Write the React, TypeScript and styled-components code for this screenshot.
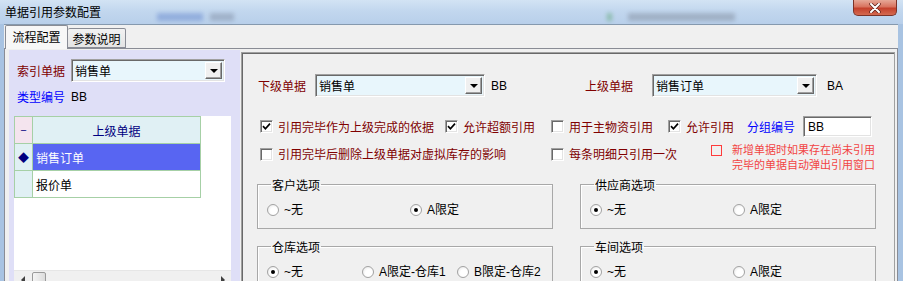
import styled, { createGlobalStyle } from 'styled-components';

const GlobalStyle = createGlobalStyle`
  html, body {
    margin: 0;
    padding: 0;
    background: #ffffff;
  }
  body {
    font-family: "Liberation Sans", "Noto Sans CJK SC", sans-serif;
    font-size: 12px;
  }
`;

type Field = { label: string; value: string; code: string; labelWidth: number; width: number; gap: number; span: number };

const fields: Field[] = [
  { label: '下级单据', value: '销售单', code: 'BB', labelWidth: 57, width: 170, gap: 6, span: 327 },
  { label: '上级单据', value: '销售订单', code: 'BA', labelWidth: 67, width: 165, gap: 10, span: 300 },
];

type RadioOpt = { text: string; checked: boolean; width: number };
type Group = { title: string; options: RadioOpt[] };

const groups: Group[] = [
  { title: '客户选项', options: [{ text: '~无', checked: false, width: 143 }, { text: 'A限定', checked: true, width: 143 }] },
  { title: '供应商选项', options: [{ text: '~无', checked: true, width: 143 }, { text: 'A限定', checked: false, width: 143 }] },
  {
    title: '仓库选项',
    options: [
      { text: '~无', checked: true, width: 95 },
      { text: 'A限定-仓库1', checked: false, width: 95 },
      { text: 'B限定-仓库2', checked: false, width: 95 },
    ],
  },
  { title: '车间选项', options: [{ text: '~无', checked: true, width: 143 }, { text: 'A限定', checked: false, width: 143 }] },
];

function CheckMark() {
  return (
    <svg width="9" height="9" viewBox="0 0 9 9">
      <polyline points="1,4.2 3.4,6.8 8,1.6" fill="none" stroke="#000" strokeWidth="1.7" />
    </svg>
  );
}

function CloseGlyph() {
  return (
    <svg width="12" height="10" viewBox="0 0 12 10">
      <path d="M2 1 L10 9 M10 1 L2 9" stroke="#5a1f18" strokeWidth="3.4" strokeLinecap="round" />
      <path d="M2 1 L10 9 M10 1 L2 9" stroke="#ffffff" strokeWidth="2" strokeLinecap="round" />
    </svg>
  );
}

function Combo({ value, width }: { value: string; width: number }) {
  return (
    <ComboBox $width={width}>
      <ComboText>{value}</ComboText>
      <ComboButton>
        <DownArrow />
      </ComboButton>
    </ComboBox>
  );
}

function Check({ label, checked, width, top = 0 }: { label: string; checked: boolean; width: number; top?: number }) {
  return (
    <CheckItem $width={width} $top={top}>
      <CheckBox>{checked ? <CheckMark /> : null}</CheckBox>
      <CheckLabel>{label}</CheckLabel>
    </CheckItem>
  );
}

function App() {
  return (
    <>
      <GlobalStyle />
      <Window>
        <TitleBar>
          <Glow $x={157} $w={46} $c="#5f82cc" />
          <Glow $x={210} $w={24} $c="#7d8aa0" />
          <Glow $x={607} $w={5} $c="#4fa060" />
          <Glow $x={628} $w={107} $c="#7e8898" />
          <Title>单据引用参数配置</Title>
          <CloseButton>
            <CloseGlyph />
          </CloseButton>
        </TitleBar>

        <Client>
          <TabStrip>
            <Tab $active>流程配置</Tab>
            <Tab>参数说明</Tab>
          </TabStrip>

          <TabPage>
            <LeftPanel>
              <IndexRow>
                <DarkLabel $width={54}>索引单据</DarkLabel>
                <Combo value="销售单" width={154} />
              </IndexRow>
              <TypeRow>
                <BlueLabel $width={54}>类型编号</BlueLabel>
                <Code>BB</Code>
              </TypeRow>

              <Grid>
                <Table>
                  <tbody>
                    <tr>
                      <MarkCell $bg="#f4e4ee">−</MarkCell>
                      <HeadCell>上级单据</HeadCell>
                    </tr>
                    <tr>
                      <MarkCell $bg="#e0f0f4">◆</MarkCell>
                      <DataCell $selected>销售订单</DataCell>
                    </tr>
                    <tr>
                      <MarkCell $bg="#e0f0f4" />
                      <DataCell>报价单</DataCell>
                    </tr>
                  </tbody>
                </Table>
                <HScroll>
                  <ScrollArrow $dir="left" />
                  <Thumb />
                  <ScrollArrow $dir="right" />
                </HScroll>
              </Grid>
            </LeftPanel>

            <RightPanel>
              <FieldRow>
                {fields.map((f) => (
                  <FieldGroup key={f.label} $width={f.span}>
                    <DarkLabel $width={f.labelWidth}>{f.label}</DarkLabel>
                    <Combo value={f.value} width={f.width} />
                    <Code $gap={f.gap}>{f.code}</Code>
                  </FieldGroup>
                ))}
              </FieldRow>

              <OptRow>
                <Check label="引用完毕作为上级完成的依据" checked width={185} />
                <Check label="允许超额引用" checked width={106} />
                <Check label="用于主物资引用" checked={false} width={117} />
                <Check label="允许引用" checked width={79} />
                <BlueLabel $width={56}>分组编号</BlueLabel>
                <TextBox>BB</TextBox>
              </OptRow>

              <OptRow2>
                <Check label="引用完毕后删除上级单据对虚拟库存的影响" checked={false} width={291} top={3} />
                <Check label="每条明细只引用一次" checked={false} width={160} top={3} />
                <Notice>
                  <RedBox />
                  <NoticeText>
                    <NoticeLine>新增单据时如果存在尚未引用</NoticeLine>
                    <NoticeLine>完毕的单据自动弹出引用窗口</NoticeLine>
                  </NoticeText>
                </Notice>
              </OptRow2>

              <Groups>
                {groups.map((g) => (
                  <GroupBox key={g.title}>
                    <Legend>{g.title}</Legend>
                    <RadioRow>
                      {g.options.map((o) => (
                        <RadioItem key={o.text} $width={o.width}>
                          <Radio $checked={o.checked} />
                          <RadioLabel>{o.text}</RadioLabel>
                        </RadioItem>
                      ))}
                    </RadioRow>
                  </GroupBox>
                ))}
              </Groups>
            </RightPanel>
          </TabPage>
        </Client>
      </Window>
    </>
  );
}

const Window = styled.div`
    width: 903px;
    height: 281px;
    overflow: hidden;
    display: flex;
    flex-direction: column;
    background: #a8c3e2;
  `,
  TitleBar = styled.div`
    position: relative;
    height: 24px;
    flex-shrink: 0;
    display: flex;
    align-items: flex-start;
    justify-content: space-between;
    padding-left: 5px;
    background: linear-gradient(180deg, #d2e3f4 0%, #c2d7ee 45%, #b8cfea 100%);
  `,
  Glow = styled.span<{ $x: number; $w: number; $c: string }>`
    position: absolute;
    left: ${(p) => p.$x}px;
    top: 13px;
    width: ${(p) => p.$w}px;
    height: 8px;
    background: ${(p) => p.$c};
    opacity: 0.45;
    filter: blur(2px);
  `,
  Title = styled.span`
    position: relative;
    margin-top: 5px;
    font-family: "Noto Sans CJK SC", sans-serif;
    font-size: 12px;
    line-height: 13px;
    color: #000000;
  `,
  CloseButton = styled.div`
    width: 44px;
    height: 16px;
    margin-right: 6px;
    box-sizing: border-box;
    display: flex;
    align-items: center;
    justify-content: center;
    border: 1px solid #7b3328;
    border-top: none;
    border-radius: 0 0 5px 5px;
    background: linear-gradient(180deg, #e6a897 0%, #d8735f 45%, #c4412c 55%, #d46a50 100%);
  `,
  Client = styled.div`
    flex: 1;
    min-height: 0;
    margin: 0 5px 0 4px;
    display: flex;
    flex-direction: column;
    background: #f0f0f0;
    border-top: 1px solid #8599ae;
  `,
  TabStrip = styled.div`
    height: 23px;
    flex-shrink: 0;
    display: flex;
    align-items: flex-end;
    padding-left: 1px;
  `,
  Tab = styled.div<{ $active?: boolean }>`
    position: relative;
    z-index: ${(p) => (p.$active ? 2 : 1)};
    box-sizing: border-box;
    width: ${(p) => (p.$active ? 63 : 58)}px;
    height: ${(p) => (p.$active ? 24 : 20)}px;
    margin-bottom: ${(p) => (p.$active ? -1 : 0)}px;
    display: flex;
    align-items: center;
    justify-content: center;
    padding-bottom: ${(p) => (p.$active ? 2 : 0)}px;
    border: 1px solid #898c95;
    border-bottom: ${(p) => (p.$active ? 'none' : '1px solid #898c95')};
    border-left: ${(p) => (p.$active ? '1px solid #898c95' : 'none')};
    border-radius: 2px 2px 0 0;
    background: ${(p) => (p.$active ? '#f7f7f7' : 'linear-gradient(#f2f2f2, #e4e4e4)')};
    font-family: "Noto Sans CJK SC", sans-serif;
    font-size: 12px;
    color: #000000;
  `,
  TabPage = styled.div`
    flex: 1;
    min-height: 0;
    display: flex;
    gap: 1px;
    padding: 1px 2px 0 4px;
    border: 1px solid #898c95;
    border-bottom: none;
    background: #f0f0f0;
  `,
  LeftPanel = styled.div`
    width: 231px;
    flex-shrink: 0;
    box-sizing: border-box;
    padding: 9px 0 0 8px;
    display: flex;
    flex-direction: column;
    background: #dfdff7;
  `,
  IndexRow = styled.div`
    height: 23px;
    display: flex;
    align-items: center;
  `,
  TypeRow = styled.div`
    height: 12px;
    margin-top: 9px;
    display: flex;
    align-items: center;
  `,
  DarkLabel = styled.span<{ $width: number }>`
    width: ${(p) => p.$width}px;
    flex-shrink: 0;
    font-family: "Noto Sans CJK SC", sans-serif;
    font-size: 12px;
    line-height: 14px;
    color: #800000;
  `,
  BlueLabel = styled.span<{ $width: number }>`
    width: ${(p) => p.$width}px;
    flex-shrink: 0;
    font-family: "Noto Sans CJK SC", sans-serif;
    font-size: 12px;
    line-height: 14px;
    color: #0000ff;
  `,
  Code = styled.span<{ $gap?: number }>`
    margin-left: ${(p) => p.$gap ?? 0}px;
    font-size: 12px;
    color: #000000;
  `,
  ComboBox = styled.div<{ $width: number }>`
    width: ${(p) => p.$width}px;
    height: 23px;
    flex-shrink: 0;
    box-sizing: border-box;
    display: flex;
    align-items: center;
    border: 1px solid;
    border-color: #a0a0a0 #ffffff #ffffff #a0a0a0;
    box-shadow: inset 1px 1px 0 #696969, inset -1px -1px 0 #e3e3e3;
    background: #e8f6fc;
    padding: 2px 2px 2px 3px;
  `,
  ComboText = styled.span`
    flex: 1;
    font-family: "Noto Sans CJK SC", sans-serif;
    font-size: 12px;
    color: #000000;
  `,
  ComboButton = styled.div`
    width: 17px;
    height: 17px;
    box-sizing: border-box;
    display: flex;
    align-items: center;
    justify-content: center;
    background: #f0f0f0;
    border: 1px solid;
    border-color: #ffffff #696969 #696969 #ffffff;
    box-shadow: inset -1px -1px 0 #a0a0a0;
  `,
  DownArrow = styled.span`
    width: 0;
    height: 0;
    border-left: 4px solid transparent;
    border-right: 4px solid transparent;
    border-top: 4px solid #000000;
  `,
  Grid = styled.div`
    width: 217px;
    height: 173px;
    margin: 13px 0 0 -3px;
    flex-shrink: 0;
    display: flex;
    flex-direction: column;
    background: #ffffff;
  `,
  Table = styled.table`
    width: 187px;
    border-collapse: collapse;
    font-family: "Noto Sans CJK SC", sans-serif;
    font-size: 12px;
    tr {
      height: 27px;
    }
    td {
      border: 1px solid #a6d0a6;
      padding: 0;
    }
  `,
  MarkCell = styled.td<{ $bg: string }>`
    width: 17px;
    background: ${(p) => p.$bg};
    text-align: center;
    color: #000080;
    font-size: 11px;
  `,
  HeadCell = styled.td`
    background: #e0f0f4;
    color: #000080;
    text-align: center;
  `,
  DataCell = styled.td<{ $selected?: boolean }>`
    padding-left: 3px !important;
    background: ${(p) => (p.$selected ? '#5865f2' : '#ffffff')};
    color: ${(p) => (p.$selected ? '#ffffff' : '#000000')};
  `,
  HScroll = styled.div`
    margin-top: auto;
    height: 17px;
    flex-shrink: 0;
    display: flex;
    align-items: flex-start;
    padding-top: 1px;
    background: #f0f0f0;
    border-top: 1px solid #e6e6e6;
  `,
  ScrollArrow = styled.span<{ $dir: 'left' | 'right' }>`
    width: 17px;
    height: 15px;
    display: flex;
    align-items: center;
    justify-content: center;
    margin-left: ${(p) => (p.$dir === 'right' ? 'auto' : '0')};
    &::before {
      content: '';
      border-top: 4px solid transparent;
      border-bottom: 4px solid transparent;
      ${(p) => (p.$dir === 'left' ? 'border-right: 4px solid #404040;' : 'border-left: 4px solid #404040;')}
    }
  `,
  Thumb = styled.span`
    width: 14px;
    height: 15px;
    margin-left: 1px;
    box-sizing: border-box;
    border: 1px solid #9a9a9a;
    border-radius: 2px;
    background: linear-gradient(90deg, #f4f4f4, #dcdcdc);
  `,
  RightPanel = styled.div`
    flex: 1;
    margin-top: 2px;
    box-sizing: border-box;
    padding: 21px 0 0 15px;
    display: flex;
    flex-direction: column;
    border: 1px solid #a0a0a0;
    border-bottom: none;
    box-shadow: inset 1px 1px 0 #696969;
    background: #f0f0f0;
  `,
  FieldRow = styled.div`
    height: 23px;
    padding-left: 1px;
    display: flex;
    align-items: center;
  `,
  FieldGroup = styled.div<{ $width: number }>`
    width: ${(p) => p.$width}px;
    flex-shrink: 0;
    display: flex;
    align-items: center;
  `,
  OptRow = styled.div`
    height: 21px;
    margin-top: 19px;
    padding-left: 3px;
    display: flex;
    align-items: center;
  `,
  OptRow2 = styled.div`
    height: 26px;
    margin-top: 7px;
    padding-left: 3px;
    display: flex;
    align-items: flex-start;
  `,
  CheckItem = styled.div<{ $width: number; $top: number }>`
    width: ${(p) => p.$width}px;
    flex-shrink: 0;
    margin-top: ${(p) => p.$top}px;
    display: flex;
    align-items: center;
    gap: 5px;
  `,
  CheckBox = styled.span`
    width: 13px;
    height: 13px;
    flex-shrink: 0;
    box-sizing: border-box;
    display: flex;
    align-items: center;
    justify-content: center;
    border: 1px solid;
    border-color: #a0a0a0 #ffffff #ffffff #a0a0a0;
    box-shadow: inset 1px 1px 0 #696969, inset -1px -1px 0 #e3e3e3;
    background: #ffffff;
  `,
  CheckLabel = styled.span`
    font-family: "Noto Sans CJK SC", sans-serif;
    font-size: 12px;
    line-height: 14px;
    color: #800000;
    white-space: nowrap;
  `,
  TextBox = styled.div`
    width: 69px;
    height: 21px;
    box-sizing: border-box;
    display: flex;
    align-items: center;
    padding-left: 4px;
    border: 1px solid;
    border-color: #a0a0a0 #ffffff #ffffff #a0a0a0;
    box-shadow: inset 1px 1px 0 #696969, inset -1px -1px 0 #e3e3e3;
    background: #ffffff;
    font-size: 12px;
    color: #000000;
  `,
  Notice = styled.div`
    display: flex;
    align-items: flex-start;
  `,
  RedBox = styled.span`
    width: 11px;
    height: 11px;
    margin-top: 1px;
    flex-shrink: 0;
    box-sizing: border-box;
    border: 1px solid #ff3b3b;
  `,
  NoticeText = styled.div`
    margin-left: 10px;
    margin-top: -3px;
    display: flex;
    flex-direction: column;
    font-family: "Noto Sans CJK SC", sans-serif;
    font-size: 11px;
    line-height: 16px;
    color: #f24444;
    white-space: nowrap;
  `,
  NoticeLine = styled.span`
    display: block;
    height: 15px;
    overflow: visible;
  `,
  Groups = styled.div`
    margin-top: 8px;
    display: grid;
    grid-template-columns: 296px 296px;
    column-gap: 27px;
    row-gap: 11px;
  `,
  GroupBox = styled.fieldset`
    height: 51px;
    box-sizing: border-box;
    margin: 0;
    padding: 0 0 0 9px;
    min-inline-size: 0;
    border: 1px solid #a8a8a8;
    box-shadow: inset 1px 1px 0 #ffffff;
  `,
  Legend = styled.legend`
    margin-left: 4px;
    padding: 0 1px;
    font-family: "Noto Sans CJK SC", sans-serif;
    font-size: 12px;
    line-height: 13px;
    color: #000000;
  `,
  RadioRow = styled.div`
    height: 14px;
    margin-top: 12px;
    display: flex;
    align-items: center;
  `,
  RadioItem = styled.div<{ $width: number }>`
    width: ${(p) => p.$width}px;
    flex-shrink: 0;
    display: flex;
    align-items: center;
    gap: 5px;
  `,
  Radio = styled.span<{ $checked: boolean }>`
    width: 12px;
    height: 12px;
    flex-shrink: 0;
    box-sizing: border-box;
    border-radius: 50%;
    border: 1px solid #a2a2a2;
    background: radial-gradient(circle at 60% 60%, #ffffff 40%, #e2e2e2 100%);
    display: flex;
    align-items: center;
    justify-content: center;
    &::after {
      content: '';
      width: 4px;
      height: 4px;
      border-radius: 50%;
      background: ${(p) => (p.$checked ? '#000000' : 'transparent')};
    }
  `,
  RadioLabel = styled.span`
    font-family: "Liberation Sans", "Noto Sans CJK SC", sans-serif;
    font-size: 12px;
    line-height: 14px;
    color: #000000;
    white-space: nowrap;
  `;

export default App;
